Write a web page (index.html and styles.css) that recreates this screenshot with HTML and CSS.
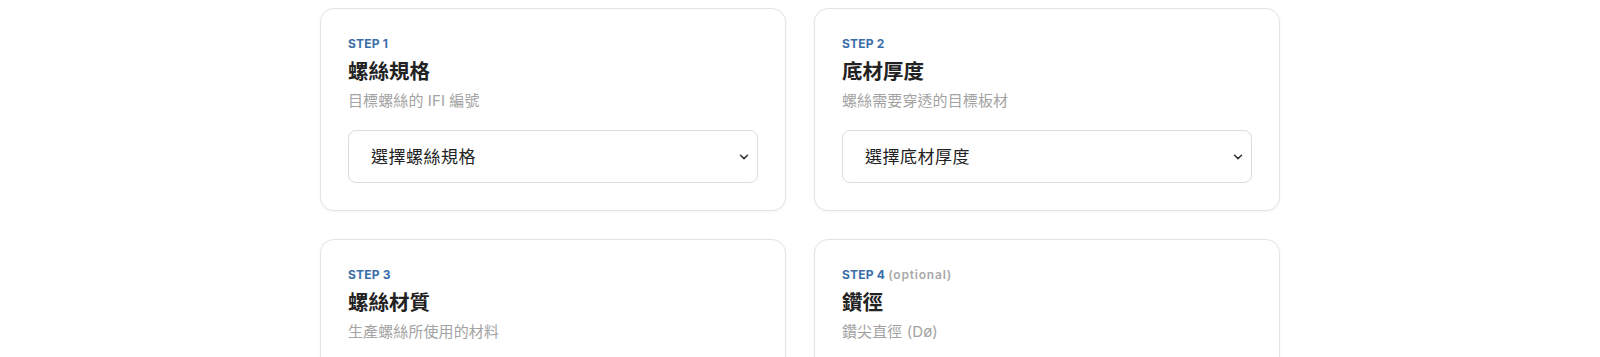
FILE: index.html
```html
<!DOCTYPE html>
<html lang="zh-Hant">
<head>
<meta charset="utf-8">
<title>Steps</title>
<link rel="stylesheet" href="styles.css">
</head>
<body>
<main class="grid">
  <section class="card">
    <div class="step">STEP 1</div>
    <h2 class="title">螺絲規格</h2>
    <p class="desc">目標螺絲的 IFI 編號</p>
    <div class="select-wrap">
      <select class="select"><option>選擇螺絲規格</option></select>
      <svg class="chev" width="10" height="6" viewBox="0 0 10 6"><path d="M1.5 1.2 L5 4.6 L8.5 1.2" fill="none" stroke="#333" stroke-width="1.5" stroke-linecap="round" stroke-linejoin="round"/></svg>
    </div>
  </section>
  <section class="card">
    <div class="step">STEP 2</div>
    <h2 class="title">底材厚度</h2>
    <p class="desc">螺絲需要穿透的目標板材</p>
    <div class="select-wrap">
      <select class="select"><option>選擇底材厚度</option></select>
      <svg class="chev" width="10" height="6" viewBox="0 0 10 6"><path d="M1.5 1.2 L5 4.6 L8.5 1.2" fill="none" stroke="#333" stroke-width="1.5" stroke-linecap="round" stroke-linejoin="round"/></svg>
    </div>
  </section>
  <section class="card">
    <div class="step">STEP 3</div>
    <h2 class="title">螺絲材質</h2>
    <p class="desc">生產螺絲所使用的材料</p>
    <div class="select-wrap">
      <select class="select"><option>選擇螺絲材質</option></select>
      <svg class="chev" width="10" height="6" viewBox="0 0 10 6"><path d="M1.5 1.2 L5 4.6 L8.5 1.2" fill="none" stroke="#333" stroke-width="1.5" stroke-linecap="round" stroke-linejoin="round"/></svg>
    </div>
  </section>
  <section class="card">
    <div class="step">STEP 4 <span class="optional">(optional)</span></div>
    <h2 class="title">鑽徑</h2>
    <p class="desc">鑽尖直徑 (Dø)</p>
    <div class="select-wrap">
      <select class="select"><option>選擇鑽徑</option></select>
      <svg class="chev" width="10" height="6" viewBox="0 0 10 6"><path d="M1.5 1.2 L5 4.6 L8.5 1.2" fill="none" stroke="#333" stroke-width="1.5" stroke-linecap="round" stroke-linejoin="round"/></svg>
    </div>
  </section>
</main>
</body>
</html>
```

FILE: styles.css
```css
html, body {
  margin: 0;
  padding: 0;
  background: #ffffff;
}
body {
  padding-top: 8px;
  font-family: Inter, "Noto Sans CJK TC", sans-serif;
  color: #222222;
}
.grid {
  width: 960px;
  margin: 0 auto;
  display: grid;
  grid-template-columns: 1fr 1fr;
  gap: 28px;
}
.card {
  border: 1px solid #e4e4e2;
  border-radius: 14px;
  background: #fff;
  box-shadow: 0 1px 3px rgba(0, 0, 0, 0.05);
  padding: 27px;
  display: flex;
  flex-direction: column;
}
.step {
  font-size: 12px;
  line-height: 16px;
  font-weight: 700;
  letter-spacing: 0.2px;
  color: #3a6ea8;
}
.optional {
  color: #a9a9a9;
  font-weight: 600;
  letter-spacing: 0.8px;
}
.title {
  margin: 6px 0 0;
  font-size: 20.5px;
  line-height: 28px;
  font-weight: 700;
  color: #222222;
}
.desc {
  margin: 4px 0 0;
  font-size: 15px;
  line-height: 22px;
  color: #a3a3a3;
  letter-spacing: 0.1px;
}
.select-wrap {
  position: relative;
  margin-top: 18px;
}
.select {
  appearance: none;
  -webkit-appearance: none;
  width: 100%;
  height: 53px;
  box-sizing: border-box;
  border: 1px solid #dcdcda;
  border-radius: 8px;
  background: #fff;
  padding: 0 22px;
  font-family: Inter, "Noto Sans CJK TC", sans-serif;
  font-size: 17px;
  letter-spacing: 0.5px;
  color: #222;
}
.chev {
  position: absolute;
  right: 9px;
  top: 24px;
}
```
